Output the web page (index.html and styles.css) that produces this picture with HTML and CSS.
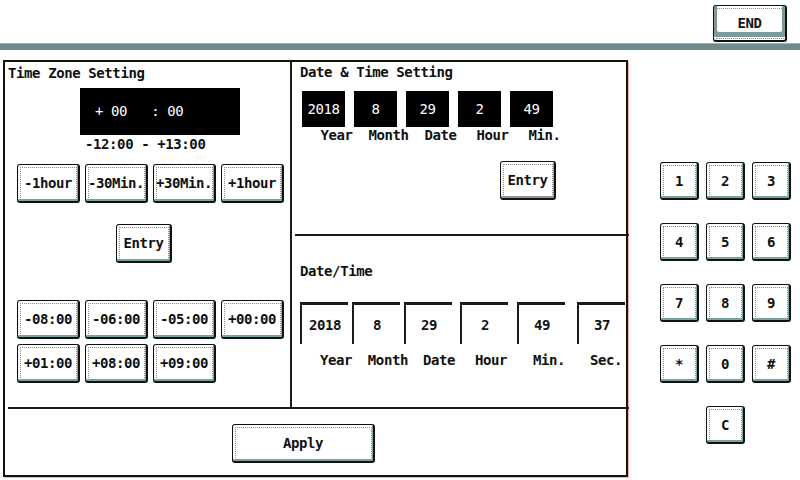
FILE: index.html
```html
<!DOCTYPE html>
<html lang="en">
<head>
    <meta charset="UTF-8">
    <title>Date &amp; Time Setting</title>
    <link rel="stylesheet" href="styles.css">
</head>
<body>
    <div class="header">
        <button class="btn end-btn">END</button>
    </div>
    <div class="sep"></div>

    <div class="main">
        <div class="frame">
            <div class="panel-left">
                <div class="title">Time Zone Setting</div>
                <div class="tz-display">+ 00&nbsp;&nbsp;&nbsp;: 00</div>
                <div class="tz-range">-12:00 - +13:00</div>
                <div class="btn-row">
                    <button class="btn tz-btn">-1hour</button>
                    <button class="btn tz-btn">-30Min.</button>
                    <button class="btn tz-btn">+30Min.</button>
                    <button class="btn tz-btn">+1hour</button>
                </div>
                <button class="btn entry-btn entry-left">Entry</button>
                <div class="btn-row preset-row">
                    <button class="btn tz-btn">-08:00</button>
                    <button class="btn tz-btn">-06:00</button>
                    <button class="btn tz-btn">-05:00</button>
                    <button class="btn tz-btn">+00:00</button>
                </div>
                <div class="btn-row preset-row2">
                    <button class="btn tz-btn">+01:00</button>
                    <button class="btn tz-btn">+08:00</button>
                    <button class="btn tz-btn">+09:00</button>
                </div>
            </div>

            <div class="panel-right">
                <div class="setting">
                    <div class="title">Date &amp; Time Setting</div>
                    <div class="dt-boxes">
                        <div class="dt-box">2018</div>
                        <div class="dt-box">8</div>
                        <div class="dt-box">29</div>
                        <div class="dt-box">2</div>
                        <div class="dt-box">49</div>
                    </div>
                    <div class="dt-labels">
                        <span>Year</span><span>Month</span><span>Date</span><span>Hour</span><span>Min.</span>
                    </div>
                    <button class="btn entry-btn entry-right">Entry</button>
                </div>
                <div class="current">
                    <div class="title">Date/Time</div>
                    <div class="cur-row">
                        <div class="cur-cell c1"><div class="cur-val">2018</div><div class="cur-label">Year</div></div>
                        <div class="cur-cell c2"><div class="cur-val">8</div><div class="cur-label">Month</div></div>
                        <div class="cur-cell c3"><div class="cur-val">29</div><div class="cur-label">Date</div></div>
                        <div class="cur-cell c4"><div class="cur-val">2</div><div class="cur-label">Hour</div></div>
                        <div class="cur-cell c5"><div class="cur-val">49</div><div class="cur-label">Min.</div></div>
                        <div class="cur-cell c6"><div class="cur-val">37</div><div class="cur-label">Sec.</div></div>
                    </div>
                </div>
            </div>

            <div class="apply-row">
                <button class="btn apply-btn">Apply</button>
            </div>
        </div>

        <div class="keypad">
            <button class="btn key">1</button>
            <button class="btn key">2</button>
            <button class="btn key">3</button>
            <button class="btn key">4</button>
            <button class="btn key">5</button>
            <button class="btn key">6</button>
            <button class="btn key">7</button>
            <button class="btn key">8</button>
            <button class="btn key">9</button>
            <button class="btn key">*</button>
            <button class="btn key">0</button>
            <button class="btn key">#</button>
            <button class="btn key key-c">C</button>
        </div>
    </div>
</body>
</html>
```

FILE: styles.css
```css
body {
    margin: 0;
    width: 800px;
    height: 480px;
    background: #fff;
    font-family: "DejaVu Sans Mono", "Liberation Mono", monospace;
    font-size: 14px;
    letter-spacing: -0.4px;
    font-weight: bold;
    color: #111;
    overflow: hidden;
}
.header {
    height: 43px;
    display: flex;
    justify-content: flex-end;
    align-items: flex-start;
}
.sep {
    height: 7px;
    background: #6e8c8c;
    border-top: 1px solid #9db3b3;
    box-sizing: border-box;
}
.btn {
    box-sizing: border-box;
    font-family: inherit;
    font-size: 14px;
    letter-spacing: -0.4px;
    font-weight: bold;
    color: #111;
    background: #fff;
    border: 1px solid #111;
    border-bottom-width: 2px;
    border-right-width: 2px;
    border-radius: 3px;
    outline: 1px dotted #8a8a8a;
    outline-offset: -4px;
    box-shadow: inset -1px -2px 0 #7da6a6;
    padding: 0;
    cursor: pointer;
}
.end-btn {
    width: 74px;
    height: 37px;
    margin: 5px 13px 0 0;
    font-size: 14px;
    box-shadow: inset 0 -3px 0 #fff, inset 4px -9px 0 -1px #7a9c9c, inset -4px -9px 0 -1px #7a9c9c;
}
.main {
    display: flex;
    padding: 10px 0 0 3px;
}
.frame {
    width: 625px;
    height: 417px;
    box-sizing: border-box;
    border: 2px solid #1a1010;
    box-shadow: 1px 1px 0 #f2b0b0;
    display: grid;
    grid-template-columns: 287px 1fr;
    grid-template-rows: 347px 1fr;
}
.title {
    line-height: 18px;
}
.panel-left {
    border-right: 2px solid #1a1a1a;
    border-bottom: 2px solid #1a1a1a;
    margin-left: 3px;
}
.panel-left .title {
    margin-top: 2px;
}
.tz-display {
    width: 160px;
    height: 47px;
    margin: 6px 0 0 72px;
    background: #000;
    color: #fff;
    font-weight: normal;
    font-size: 14px;
    line-height: 47px;
    padding-left: 15px;
    box-sizing: border-box;
}
.tz-range {
    margin: 1px 0 0 77px;
    line-height: 16px;
}
.btn-row {
    display: flex;
    gap: 5px;
    margin: 12px 0 0 9px;
}
.tz-btn {
    width: 63px;
    height: 39px;
}
.entry-btn {
    width: 56px;
    height: 39px;
}
.entry-left {
    display: block;
    margin: 21px 0 0 108px;
}
.preset-row {
    margin-top: 37px;
}
.preset-row2 {
    margin-top: 5px;
}
.panel-right {
    display: flex;
    flex-direction: column;
    border-bottom: 2px solid #1a1a1a;
}
.setting {
    height: 172px;
    border-bottom: 2px solid #1a1a1a;
    margin-left: 3px;
    padding-left: 5px;
}
.setting .title {
    margin-top: 1px;
}
.dt-boxes {
    display: flex;
    gap: 9px;
    margin: 10px 0 0 2px;
}
.dt-box {
    width: 43px;
    height: 36px;
    background: #000;
    color: #fff;
    font-weight: normal;
    line-height: 36px;
    text-align: center;
}
.dt-labels {
    display: flex;
    gap: 9px;
    margin-left: 15px;
    line-height: 16px;
}
.dt-labels span {
    width: 43px;
    text-align: center;
}
.entry-right {
    display: block;
    margin: 18px 0 0 200px;
}
.current {
    padding-left: 8px;
}
.current .title {
    margin-top: 26px;
}
.cur-row {
    display: flex;
    margin-top: 22px;
}
.cur-cell {
    width: 48px;
    margin-right: 4px;
}
.c3 { margin-right: 8px; }
.c4 { margin-right: 9px; }
.c5 { margin-right: 12px; }
.cur-val {
    height: 42px;
    border-top: 3px solid #1a1a1a;
    border-left: 2px solid #1a1a1a;
    box-sizing: border-box;
    line-height: 40px;
    text-align: center;
}
.cur-label {
    line-height: 16px;
    margin-top: 8px;
    text-align: right;
}
.c1 .cur-label { margin-right: -4px; }
.c2 .cur-label { margin-right: -8px; }
.c3 .cur-label { margin-right: -3px; }
.c4 .cur-label { margin-right: 1px; }
.c5 .cur-label { margin-right: 0; }
.c6 .cur-label { margin-right: 3px; }
.apply-row {
    grid-column: 1 / 3;
    padding: 15px 0 0 227px;
}
.apply-btn {
    width: 143px;
    height: 39px;
}
.keypad {
    display: grid;
    grid-template-columns: repeat(3, 39px);
    column-gap: 7px;
    row-gap: 23px;
    grid-auto-rows: 38px;
    margin: 102px 0 0 32px;
    align-content: start;
}
.key {
    width: 39px;
    height: 38px;
}
.key-c {
    grid-column: 2;
}
```
